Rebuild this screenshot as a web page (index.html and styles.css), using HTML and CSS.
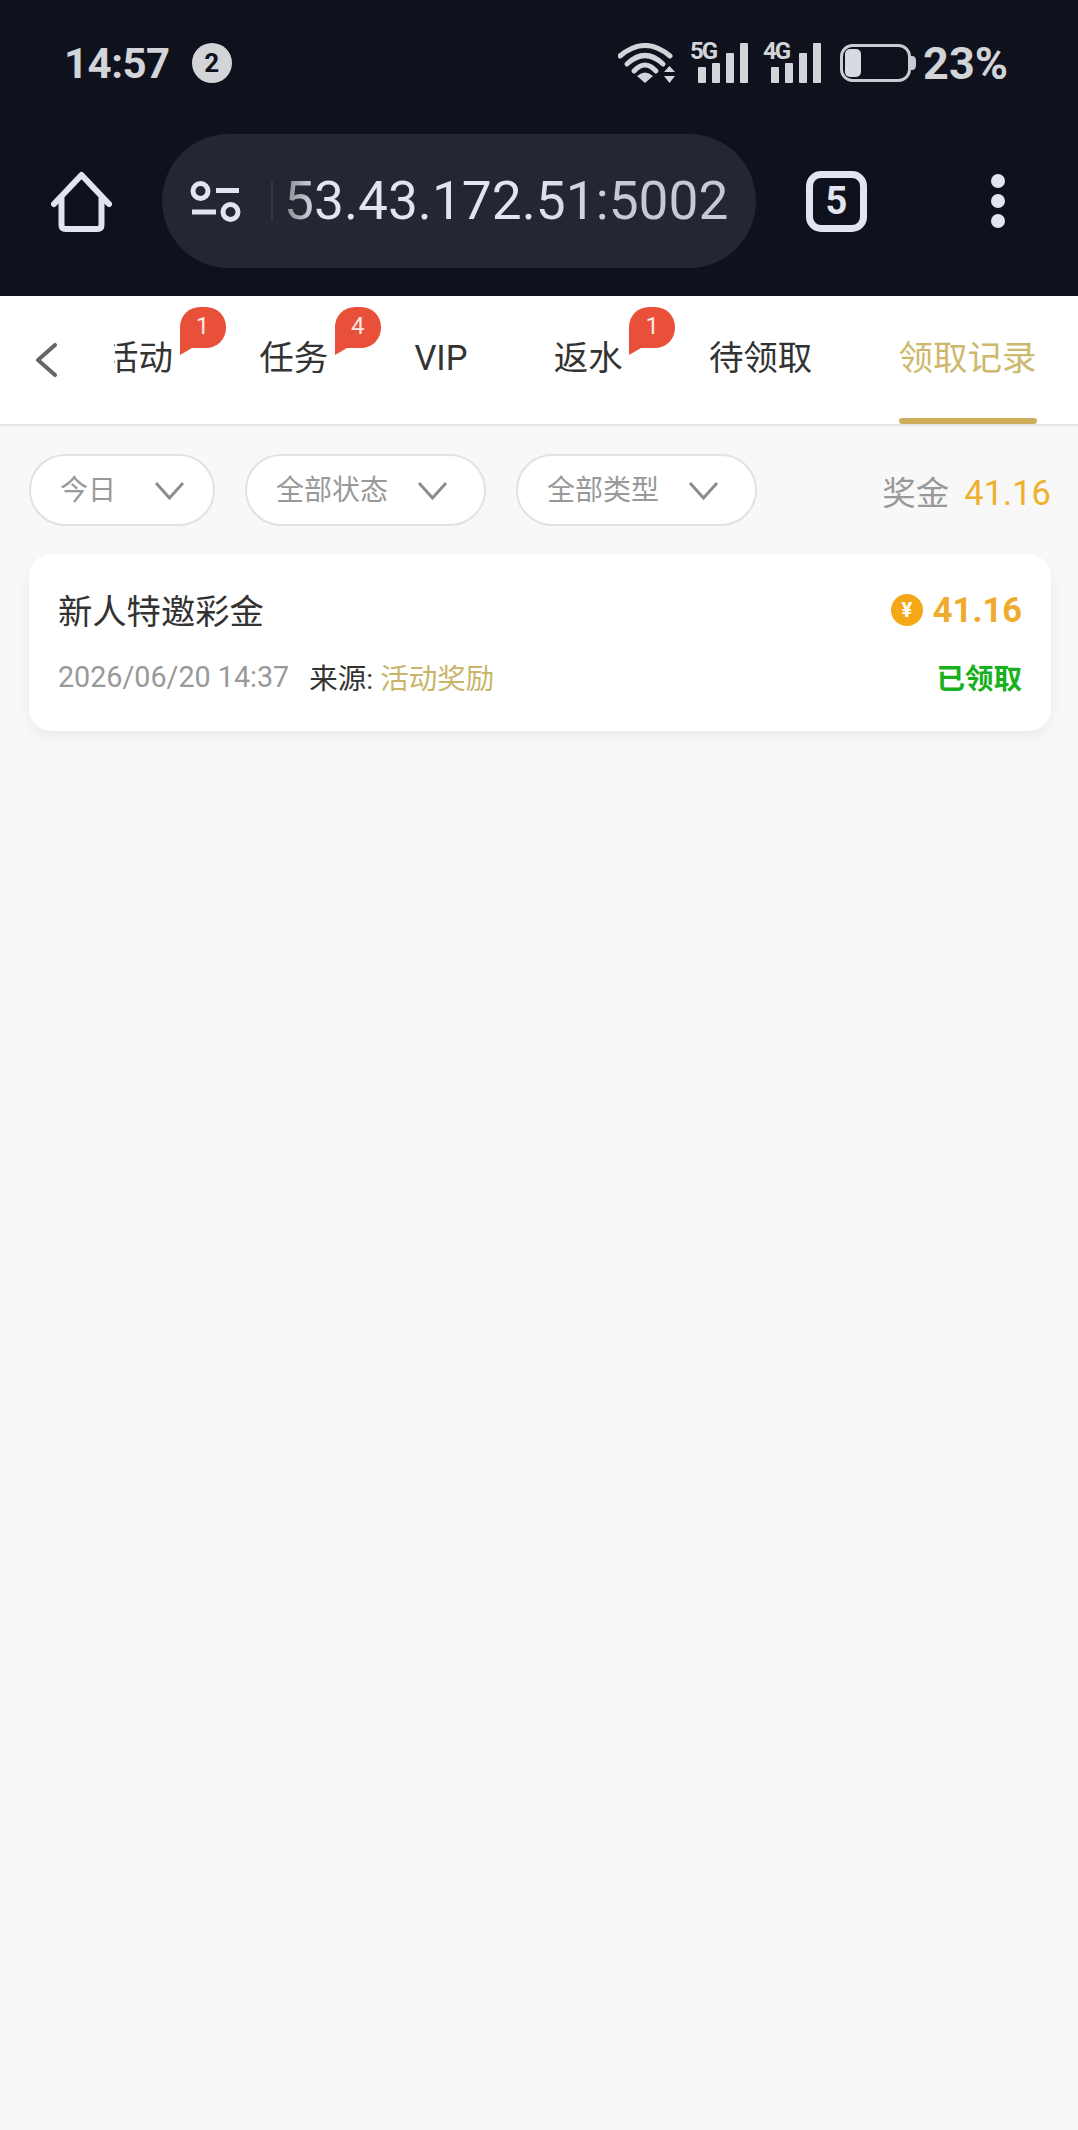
FILE: index.html
```html
<!DOCTYPE html>
<html lang="zh-CN">
<head>
    <meta charset="UTF-8">
    <meta name="viewport" content="width=device-width, initial-scale=1.0">
    <title>领取记录</title>
    <link rel="stylesheet" href="styles.css">
</head>
<body>
    <header class="top-bar">
        <div class="status-bar">
            <div class="status-left">
                <span class="clock">14:57</span>
                <span class="notify-count">2</span>
            </div>
            <div class="status-right">
                <svg class="wifi" viewBox="0 0 57 40" width="57" height="40">
                    <g fill="none" stroke="#d2d4d8" stroke-width="5" stroke-linecap="round">
                        <path d="M2 13Q27 -8 52 13"/>
                        <path d="M9 21Q27 4 45 21"/>
                        <path d="M16 28Q27 16 38 28"/>
                    </g>
                    <path d="M19 33Q27 26 35 33L27 40Z" fill="#d2d4d8"/>
                    <path d="M46 29L51.500 23L57 29ZM46 33H57L51.500 40Z" fill="#d2d4d8"/>
                </svg>
                <div class="signal">
                    <span class="signal-type">5G</span>
                    <i class="bar bar-1"></i><i class="bar bar-2"></i><i class="bar bar-3"></i><i class="bar bar-4"></i>
                </div>
                <div class="signal">
                    <span class="signal-type">4G</span>
                    <i class="bar bar-1"></i><i class="bar bar-2"></i><i class="bar bar-3"></i><i class="bar bar-4"></i>
                </div>
                <div class="battery-group">
                    <svg viewBox="0 0 76 38" width="76" height="38">
                        <rect x="1.500" y="1.500" width="68" height="35" rx="11" fill="none" stroke="#c9cbd0" stroke-width="3"/>
                        <rect x="5" y="5" width="16" height="28" rx="5" fill="#d8dadf"/>
                        <path d="M71 12H72Q76 12 76 17V21Q76 26 72 26H71Z" fill="#c9cbd0"/>
                    </svg>
                    <span class="battery-pct">23%</span>
                </div>
            </div>
        </div>
        <div class="nav-row">
            <svg class="home-icon" viewBox="0 0 61 61" width="61" height="61">
                <path d="M3 33L30.500 4L58 33M10.500 26V54Q10.500 58 14.500 58H46.500Q50.500 58 50.500 54V26" fill="none" stroke="#e2e4f0" stroke-width="6" stroke-linecap="round" stroke-linejoin="round"/>
            </svg>
            <div class="url-pill">
                <svg class="tune-icon" viewBox="0 0 51 41" width="51" height="41">
                    <g fill="none" stroke="#e2e4f0" stroke-width="5">
                        <circle cx="10.500" cy="10" r="7.500"/>
                        <circle cx="40.500" cy="31" r="7.500"/>
                        <path d="M26 9.500H49M2 31H26"/>
                    </g>
                </svg>
                <span class="url-divider"></span>
                <span class="url-text">53.43.172.51:5002</span>
            </div>
            <div class="tab-count">5</div>
            <div class="more-dots"><i></i><i></i><i></i></div>
        </div>
    </header>

    <nav class="tabs-bar">
        <div class="back-btn">
            <svg viewBox="0 0 22 34" width="22" height="34">
                <path d="M20 2L3 17L20 32" fill="none" stroke="#666" stroke-width="4" stroke-linecap="round" stroke-linejoin="round"/>
            </svg>
        </div>
        <div class="tab-list">
            <div class="tab tab-first">活动<span class="tab-badge">1</span></div>
            <div class="tab">任务<span class="tab-badge">4</span></div>
            <div class="tab">VIP</div>
            <div class="tab">返水<span class="tab-badge">1</span></div>
            <div class="tab">待领取</div>
            <div class="tab active"><span class="tab-label">领取记录</span></div>
        </div>
    </nav>

    <main class="content">
        <div class="filter-row">
            <div class="filter filter-day">
                <span class="filter-label">今日</span>
                <svg viewBox="0 0 31 19" width="31" height="19"><path d="M2 2L15.500 17L29 2" fill="none" stroke="#8c8c8c" stroke-width="3"/></svg>
            </div>
            <div class="filter">
                <span class="filter-label">全部状态</span>
                <svg viewBox="0 0 31 19" width="31" height="19"><path d="M2 2L15.500 17L29 2" fill="none" stroke="#8c8c8c" stroke-width="3"/></svg>
            </div>
            <div class="filter">
                <span class="filter-label">全部类型</span>
                <svg viewBox="0 0 31 19" width="31" height="19"><path d="M2 2L15.500 17L29 2" fill="none" stroke="#8c8c8c" stroke-width="3"/></svg>
            </div>
            <div class="bonus-total">奖金<span class="bonus-value">41.16</span></div>
        </div>

        <div class="record-card">
            <div class="record-row">
                <span class="record-title">新人特邀彩金</span>
                <span class="record-amount"><i class="coin">¥</i>41.16</span>
            </div>
            <div class="record-row">
                <span class="record-meta">
                    <span class="record-date">2026/06/20 14:37</span>
                    <span class="record-source">来源: <em>活动奖励</em></span>
                </span>
                <span class="record-status">已领取</span>
            </div>
        </div>
    </main>
</body>
</html>
```

FILE: styles.css
```css
body { margin: 0; min-height: 2130px; background-color: #f8f8f8; color: #333; font-family: Roboto, "Noto Sans CJK SC", sans-serif; }
i, em { font-style: normal; }

/* browser chrome */
.top-bar { height: 296px; background-color: #0f121c; }
.status-bar { height: 126px; display: flex; justify-content: space-between; align-items: center; padding: 0 70px 0 64px; color: #d2d4d8; }
.status-left { display: flex; align-items: center; gap: 22px; }
.clock { font-size: 42px; font-weight: 700; letter-spacing: -0.5px; }
.notify-count { width: 40px; height: 40px; border-radius: 50%; background-color: #d2d4d8; color: #0f121c; font-size: 26px; font-weight: 700; display: flex; justify-content: center; align-items: center; }
.status-right { display: flex; align-items: center; gap: 17px; }
.signal { position: relative; display: flex; align-items: flex-end; gap: 6px; height: 40px; padding-left: 6px; }
.signal-type { position: absolute; left: -2px; top: -5px; font-size: 24px; line-height: 26px; font-weight: 700; letter-spacing: -2px; }
.bar { display: block; width: 8px; background-color: #d2d4d8; border-radius: 1px; }
.bar-1 { height: 16px; }
.bar-2 { height: 20px; }
.bar-3 { height: 30px; }
.bar-4 { height: 40px; }
.battery-group { display: flex; align-items: center; gap: 7px; margin-left: 2px; }
.battery-pct { font-size: 45px; font-weight: 700; }

.nav-row { display: flex; align-items: center; height: 134px; margin-top: 8px; padding-left: 51px; }
.home-icon { margin-right: 50px; }
.url-pill { position: relative; width: 594px; height: 134px; border-radius: 67px; background-color: #242732; display: flex; align-items: center; padding-left: 28px; box-sizing: border-box; }
.url-divider { width: 2px; height: 40px; margin: 0 11px 0 30px; background-color: #33363f; }
.url-text { font-size: 53.300px; background: linear-gradient(90deg, #85878f 0, #e2e4ef 36px, #e2e4ef 250px, #c6c9d4 330px); -webkit-background-clip: text; background-clip: text; color: transparent; }
.tab-count { width: 61px; height: 61px; margin-left: 50px; box-sizing: border-box; border: 7px solid #e2e4f0; border-radius: 15px; color: #e2e4f0; font-size: 38px; font-weight: 700; display: flex; justify-content: center; align-items: center; }
.more-dots { display: flex; flex-direction: column; gap: 6px; margin-left: 124px; }
.more-dots i { display: block; width: 14px; height: 14px; border-radius: 50%; background-color: #e2e4f0; }

/* tabs */
.tabs-bar { display: flex; height: 128px; background-color: #fff; border-bottom: 2px solid #e4e4e4; }
.back-btn { width: 79px; flex-shrink: 0; padding: 47px 0 0 35px; }
.tab-list { display: flex; flex: 1; overflow: hidden; }
.tab { position: relative; flex-shrink: 0; padding: 42px 43.100px 0; font-size: 34.500px; line-height: 40px; color: #333; }
.tab-first { margin-left: -53.100px; }
.tab-badge { position: absolute; left: calc(100% - 36.500px); top: 11px; z-index: 1; width: 46px; height: 41px; border-radius: 20px 20px 20px 0; background-color: #e8503a; color: #fde8e2; font-size: 24px; line-height: 38px; text-align: center; }
.tab-badge::after { content: ""; position: absolute; left: 0; top: 100%; border-left: 12px solid #e8503a; border-bottom: 7px solid transparent; }
.tab.active { color: #cdb96e; }
.tab-label { display: block; position: relative; height: 86px; }
.tab-label::after { content: ""; position: absolute; left: 0; right: 0; bottom: 0; height: 6px; border-radius: 3px; background-color: #cfae5a; }

/* filters */
.content { padding: 28px 27px 0 29px; }
.filter-row { display: flex; align-items: center; gap: 30px; }
.filter { display: flex; align-items: center; gap: 29px; height: 72px; box-sizing: border-box; padding: 0 36px 0 29px; border: 2px solid #e2e2e2; border-radius: 36px; background-color: #fff; color: #999; font-size: 28px; }
.filter-label { margin-top: -4px; }
.filter-day { gap: 38px; padding-right: 28px; }
.bonus-total { margin-left: auto; font-size: 33.500px; color: #999; }
.bonus-value { margin-left: 15px; font-size: 34.500px; color: #efb02e; }

/* record */
.record-card { margin-top: 28px; padding: 36px 29px 32px; border-radius: 22px; background-color: #fff; box-shadow: 0 6px 14px rgba(0,0,0,0.05); }
.record-row { display: flex; justify-content: space-between; align-items: center; height: 42px; }
.record-row + .record-row { margin-top: 25px; }
.record-title { margin-top: -4px; font-size: 34.300px; color: #333; }
.record-amount { display: flex; align-items: center; gap: 10px; margin-top: -2px; font-size: 34.500px; font-weight: 700; color: #efab2e; }
.coin { width: 32px; height: 32px; border-radius: 50%; background-color: #f5a817; color: #fff; font-size: 20px; font-weight: 700; display: flex; justify-content: center; align-items: center; }
.record-meta { display: flex; align-items: center; gap: 20px; margin-top: -2px; font-size: 28.500px; }
.record-date { font-size: 28.700px; color: #999; }
.record-source { margin-top: -1px; color: #333; }
.record-source em { color: #c9b56a; }
.record-status { margin-top: -4px; font-size: 28.500px; font-weight: 700; color: #18b01c; }
```
